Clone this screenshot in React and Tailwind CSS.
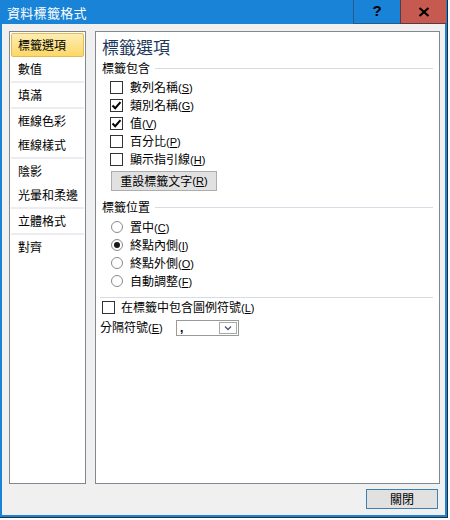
import React from "react";

const FONT = { fontFamily: '"Noto Sans CJK TC", "Noto Sans", sans-serif' };

// accelerator key, e.g. (S)
const Key = ({ k }) => (
	<span className="text-[11px]" style={{ fontFamily: '"Liberation Sans", sans-serif' }}>
		(<span className="underline">{k}</span>)
	</span>
);

const CheckBox = ({ checked }) => (
	<span className="w-[13px] h-[13px] border border-[#333333] bg-white flex items-center justify-center shrink-0">
		{checked && (
			<svg width="11" height="11" viewBox="0 0 11 11">
				<path d="M1.5 5.5 L4.2 8.2 L9.5 2.2" fill="none" stroke="#000" strokeWidth="2" />
			</svg>
		)}
	</span>
);

const Radio = ({ checked }) => (
	<span className="w-[12px] h-[12px] rounded-full border border-[#8a8a8a] bg-white flex items-center justify-center shrink-0">
		{checked && <span className="w-[6px] h-[6px] rounded-full bg-[#1a1a1a]" />}
	</span>
);

const SectionTitle = ({ children }) => (
	<div className="h-[16px] flex items-center gap-[5px]">
		<span className="text-[12px] leading-none text-black">{children}</span>
		<div className="flex-1 h-px bg-[#d5dce3]" />
	</div>
);

const groups = [
	["標籤選項", "數值"],
	["填滿"],
	["框線色彩", "框線樣式"],
	["陰影", "光暈和柔邊"],
	["立體格式"],
	["對齊"],
];

const SideList = () => (
	<div className="w-[77px] h-full border border-[#828790] bg-white p-px flex flex-col">
		{groups.map((g, gi) => (
			<div key={gi} className="flex flex-col">
				{gi > 0 && <div className="h-[2px] bg-[#ececf1]" />}
				{g.map((name) =>
					name === "標籤選項" ? (
						<div
							key={name}
							className="h-[24px] flex items-center pl-[6px] text-[12px] text-black rounded-[2px] border border-[#e2bb55] bg-gradient-to-b from-[#fdedb0] to-[#fcd864]"
						>
							{name}
						</div>
					) : (
						<div key={name} className="h-[24px] flex items-center pl-[7px] text-[12px] text-black">
							{name}
						</div>
					)
				)}
			</div>
		))}
	</div>
);

const includeItems = [
	{ label: "數列名稱", k: "S", checked: false },
	{ label: "類別名稱", k: "G", checked: true },
	{ label: "值", k: "V", checked: true },
	{ label: "百分比", k: "P", checked: false },
	{ label: "顯示指引線", k: "H", checked: false },
];

const positions = [
	{ label: "置中", k: "C", checked: false },
	{ label: "終點內側", k: "I", checked: true },
	{ label: "終點外側", k: "O", checked: false },
	{ label: "自動調整", k: "F", checked: false },
];

const OptionsPanel = () => (
	<div className="flex-1 h-full border border-[#828790] bg-white pl-[6px] pr-[6px] pt-[3px] flex flex-col">
		<div className="h-[22px] flex items-center text-[17px] leading-none text-[#1e395b]">標籤選項</div>

		<div className="mt-[3px]">
			<SectionTitle>標籤包含</SectionTitle>
		</div>
		<div className="mt-[2px] flex flex-col">
			{includeItems.map((it) => (
				<div key={it.label} className="h-[18px] flex items-center pl-[8px] gap-[7px] text-[12px] text-black">
					<CheckBox checked={it.checked} />
					<span className="leading-none">
						{it.label}
						<Key k={it.k} />
					</span>
				</div>
			))}
		</div>
		<button className="mt-[3px] ml-[9px] w-[106px] h-[20px] border border-[#adadad] bg-[#e1e1e1] text-[12px] text-black flex items-center justify-center leading-none">
			重設標籤文字
			<Key k="R" />
		</button>

		<div className="mt-[8px]">
			<SectionTitle>標籤位置</SectionTitle>
		</div>
		<div className="mt-[3px] flex flex-col">
			{positions.map((it) => (
				<div key={it.label} className="h-[18px] flex items-center pl-[9px] gap-[7px] text-[12px] text-black">
					<Radio checked={it.checked} />
					<span className="leading-none">
						{it.label}
						<Key k={it.k} />
					</span>
				</div>
			))}
		</div>

		<div className="mt-[7px] h-px bg-[#d5dce3] -ml-[2px]" />
		<div className="h-[18px] flex items-center gap-[6px] text-[12px] text-black">
			<CheckBox checked={false} />
			<span className="leading-none">
				在標籤中包含圖例符號
				<Key k="L" />
			</span>
		</div>
		<div className="mt-[2px] h-[18px] flex items-center text-[12px] text-black -ml-[2px]">
			<span className="w-[76px] leading-none">
				分隔符號
				<Key k="E" />
			</span>
			<div className="w-[63px] h-[16px] mt-[2px] border border-[#9a9a9a] bg-white flex items-center pr-px">
				<span className="flex-1 pl-[3px] text-[12px] leading-none font-bold" style={{ fontFamily: '"Liberation Sans", sans-serif' }}>
					,
				</span>
				<span className="w-[18px] h-[12px] border border-[#a8a8a8] bg-white flex items-center justify-center">
					<svg width="8" height="6" viewBox="0 0 8 6">
						<path d="M1 1.5 L4 4.5 L7 1.5" fill="none" stroke="#4d5c70" strokeWidth="1.4" />
					</svg>
				</span>
			</div>
		</div>
	</div>
);

export default function App() {
	return (
		<div className="w-[450px] h-[520px] bg-white" style={FONT}>
			<div className="w-[448px] h-[518px] bg-[#1883d7] border-r border-b border-[#2b2b2e] flex flex-col">
				{/* title bar */}
				<div className="h-[24px] flex items-stretch shrink-0">
					<div className="flex-1 flex items-center pl-[7px] text-[13px] text-white leading-none tracking-[0.3px]">
						資料標籤格式
					</div>
					<div className="w-[47px] border-l border-b border-[#2a5a85] flex items-center justify-center text-[15px] font-bold text-black" style={{ fontFamily: '"Liberation Sans", sans-serif' }}>
						?
					</div>
					<div className="w-[46px] bg-[#c75a50] border-l border-b border-[#5a3a3a] flex items-center justify-center">
						<svg width="12" height="10" viewBox="0 0 12 10">
							<path d="M1.5 1 L10.5 9 M10.5 1 L1.5 9" stroke="#000" strokeWidth="2.2" />
						</svg>
					</div>
					<div className="w-[1px]" />
				</div>

				{/* body */}
				<div className="flex-1 mx-[2px] mb-[2px] bg-[#f0f0f0] pt-[7px] pl-[7px] pr-[5px] flex flex-col">
					<div className="h-[453px] flex gap-[9px]">
						<SideList />
						<OptionsPanel />
					</div>
					<div className="mt-[5px] flex justify-end pr-[2px]">
						<button className="w-[72px] h-[20px] border border-[#3c7fb1] bg-[#e1e1e1] text-[12px] text-black flex items-center justify-center leading-none">
							關閉
						</button>
					</div>
				</div>
			</div>
		</div>
	);
}
